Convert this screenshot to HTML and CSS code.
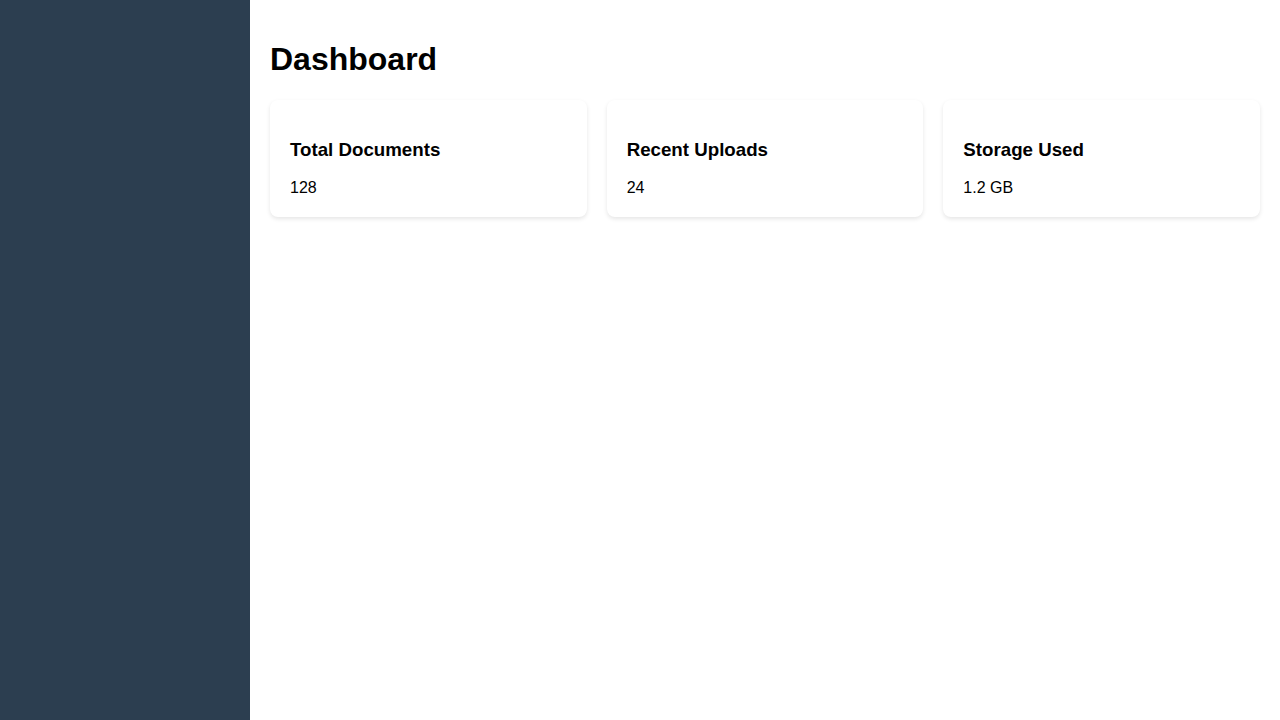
FILE: index.html
```html
<!DOCTYPE html>
<html lang="en">
<head>
<meta charset="utf-8">
<title>Dashboard</title>
<link rel="stylesheet" href="styles.css">
</head>
<body>
<div class="layout">
  <aside class="sidebar"></aside>
  <main class="main">
    <h1 class="title">Dashboard</h1>
    <div class="cards">
      <div class="card">
        <h3 class="card-title">Total Documents</h3>
        <p class="card-value">128</p>
      </div>
      <div class="card">
        <h3 class="card-title">Recent Uploads</h3>
        <p class="card-value">24</p>
      </div>
      <div class="card">
        <h3 class="card-title">Storage Used</h3>
        <p class="card-value">1.2 GB</p>
      </div>
    </div>
  </main>
</div>
</body>
</html>
```
FILE: styles.css
```css
html, body {
  margin: 0;
  padding: 0;
  height: 100%;
}
body {
  font-family: "Liberation Sans", Arial, sans-serif;
  color: #000;
  background: #fff;
}
.layout {
  display: flex;
  min-height: 100vh;
}
.sidebar {
  width: 250px;
  flex: 0 0 250px;
  background: #2c3e50;
}
.main {
  flex: 1;
  padding: 20px;
}
.title {
  font-size: 32px;
  margin: 21.44px 0;
}
.cards {
  display: grid;
  grid-template-columns: repeat(3, 1fr);
  gap: 20px;
}
.card {
  background: #fff;
  border-radius: 8px;
  padding: 20px;
  box-shadow: 0 2px 4px rgba(0, 0, 0, 0.1);
}
.card-title {
  font-size: 18.72px;
  margin: 18.72px 0;
}
.card-value {
  font-size: 16px;
  margin: 0;
}
```
